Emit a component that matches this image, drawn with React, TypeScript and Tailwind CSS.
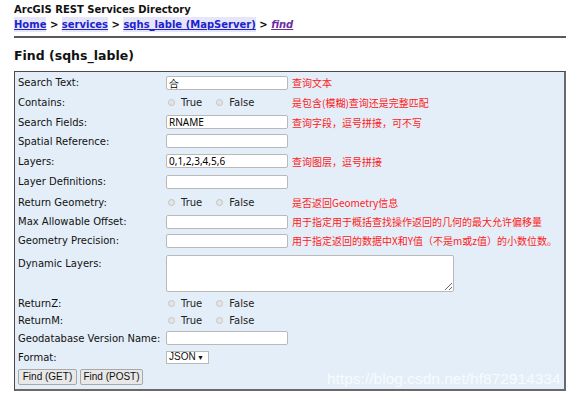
import React from "react";

const labelFont = { fontFamily: '"DejaVu Sans", Verdana, sans-serif' };

function TextBox({ value = "" }: { value?: string }) {
  return (
    <div className="w-[122px] h-[14px] bg-white border border-[#b9b9b9] rounded-[2px] flex items-center px-[2px] text-[10px] text-black leading-none">
      {value}
    </div>
  );
}

function Radio() {
  return <span className="inline-block w-[7px] h-[7px] rounded-full bg-[#e4e4e4] border border-[#c4c4c4]" />;
}

function TrueFalse() {
  return (
    <div className="flex items-center text-[10px] text-[#222]" style={labelFont}>
      <span className="ml-[2px]"><Radio /></span>
      <span className="ml-[6px]">True</span>
      <span className="ml-[14px]"><Radio /></span>
      <span className="ml-[6px]">False</span>
    </div>
  );
}

function Row({
  h,
  label,
  children,
  note,
}: {
  h: string;
  label: string;
  children?: React.ReactNode;
  note?: string;
}) {
  return (
    <div className={`flex ${h} items-center`}>
      <div className="w-[151px] pl-[3px] text-[10px] text-[#111] whitespace-nowrap" style={labelFont}>
        {label}
      </div>
      <div className="w-[126px] shrink-0">{children}</div>
      {note && (
        <div className="text-[10px] text-[#ff1a1a] whitespace-nowrap" style={{ fontFamily: '"Noto Sans CJK SC", sans-serif' }}>
          {note}
        </div>
      )}
    </div>
  );
}

export default function App() {
  return (
    <div className="w-[574px] h-[398px] bg-white relative overflow-hidden">
      <div className="pl-[14px] pr-[8px]">
        <div className="pt-[2px] h-[16px] text-[10px] font-bold text-[#111]" style={labelFont}>
          ArcGIS REST Services Directory
        </div>
        <div className="h-[17px] flex items-center text-[10px] font-bold text-[#111] whitespace-pre" style={labelFont}>
          <span className="text-[#2222cc] underline bg-[#e6e6fb]">Home</span>
          <span>{" > "}</span>
          <span className="text-[#2222cc] underline bg-[#e6e6fb]">services</span>
          <span>{" > "}</span>
          <span className="text-[#2222cc] underline bg-[#e6e6fb]">sqhs_lable (MapServer)</span>
          <span>{" > "}</span>
          <span className="text-[#6b2ba0] underline italic">find</span>
        </div>
        <div className="mt-[3px] h-[2px] bg-[#5a5a5a] w-[552px]" />
        <div className="mt-[12px] h-[16px] text-[12.5px] font-bold text-[#111] leading-none" style={labelFont}>
          Find (sqhs_lable)
        </div>
        <div className="mt-[5px] w-[552px] h-[320px] bg-[#e4eef8] border border-[#4a4a4a] border-r-2 border-r-[#6a6a6a] border-b-2 border-b-[#6a6a6a] pt-[1px]">
          <Row h="h-[19px]" label="Search Text:" note="查询文本">
            <TextBox value="合" />
          </Row>
          <Row h="h-[21px]" label="Contains:" note="是包含(模糊)查询还是完整匹配">
            <TrueFalse />
          </Row>
          <Row h="h-[18px]" label="Search Fields:" note="查询字段，逗号拼接，可不写">
            <TextBox value="RNAME" />
          </Row>
          <Row h="h-[20px]" label="Spatial Reference:">
            <TextBox />
          </Row>
          <Row h="h-[20px]" label="Layers:" note="查询图层，逗号拼接">
            <TextBox value="0,1,2,3,4,5,6" />
          </Row>
          <Row h="h-[21px]" label="Layer Definitions:">
            <TextBox />
          </Row>
          <Row h="h-[21px]" label="Return Geometry:" note="是否返回Geometry信息">
            <TrueFalse />
          </Row>
          <Row h="h-[17px]" label="Max Allowable Offset:" note="用于指定用于概括查找操作返回的几何的最大允许偏移量">
            <TextBox />
          </Row>
          <Row h="h-[21px]" label="Geometry Precision:" note="用于指定返回的数据中X和Y值（不是m或z值）的小数位数。">
            <TextBox />
          </Row>
          <div className="flex h-[44px] items-start pt-[4px]">
            <div className="w-[151px] pl-[3px] pt-[1px] text-[10px] text-[#111]" style={labelFont}>
              Dynamic Layers:
            </div>
            <textarea className="w-[288px] h-[37px] bg-white border border-[#b9b9b9] rounded-[2px] outline-none" />
          </div>
          <Row h="h-[16px]" label="ReturnZ:">
            <TrueFalse />
          </Row>
          <Row h="h-[18px]" label="ReturnM:">
            <TrueFalse />
          </Row>
          <Row h="h-[18px]" label="Geodatabase Version Name:">
            <TextBox />
          </Row>
          <Row h="h-[20px]" label="Format:">
            <div className="w-[43px] h-[13px] bg-white border border-[#b9b9b9] flex items-center justify-between px-[2px] text-[10px] text-[#111] leading-none" style={{ fontFamily: '"Liberation Sans", Arial, sans-serif' }}>
              <span>JSON</span>
              <span className="text-[7px] mr-[2px]">▼</span>
            </div>
          </Row>
          <div className="flex h-[20px] items-center pl-[3px] gap-[3px]" style={{ fontFamily: '"Liberation Sans", Arial, sans-serif' }}>
            <button className="h-[16px] w-[59px] bg-[#e8e8e8] border border-[#a8a8a8] rounded-[2px] text-[10px] text-[#111] leading-none">
              Find (GET)
            </button>
            <button className="h-[16px] w-[63px] bg-[#e8e8e8] border border-[#a8a8a8] rounded-[2px] text-[10px] text-[#111] leading-none">
              Find (POST)
            </button>
          </div>
        </div>
      </div>
      <div
        className="absolute left-[327px] top-[367px] text-[15.5px] text-white/75"
        style={{ fontFamily: '"Liberation Sans", Arial, sans-serif' }}
      >
        https://blog.csdn.net/hf872914334
      </div>
    </div>
  );
}
